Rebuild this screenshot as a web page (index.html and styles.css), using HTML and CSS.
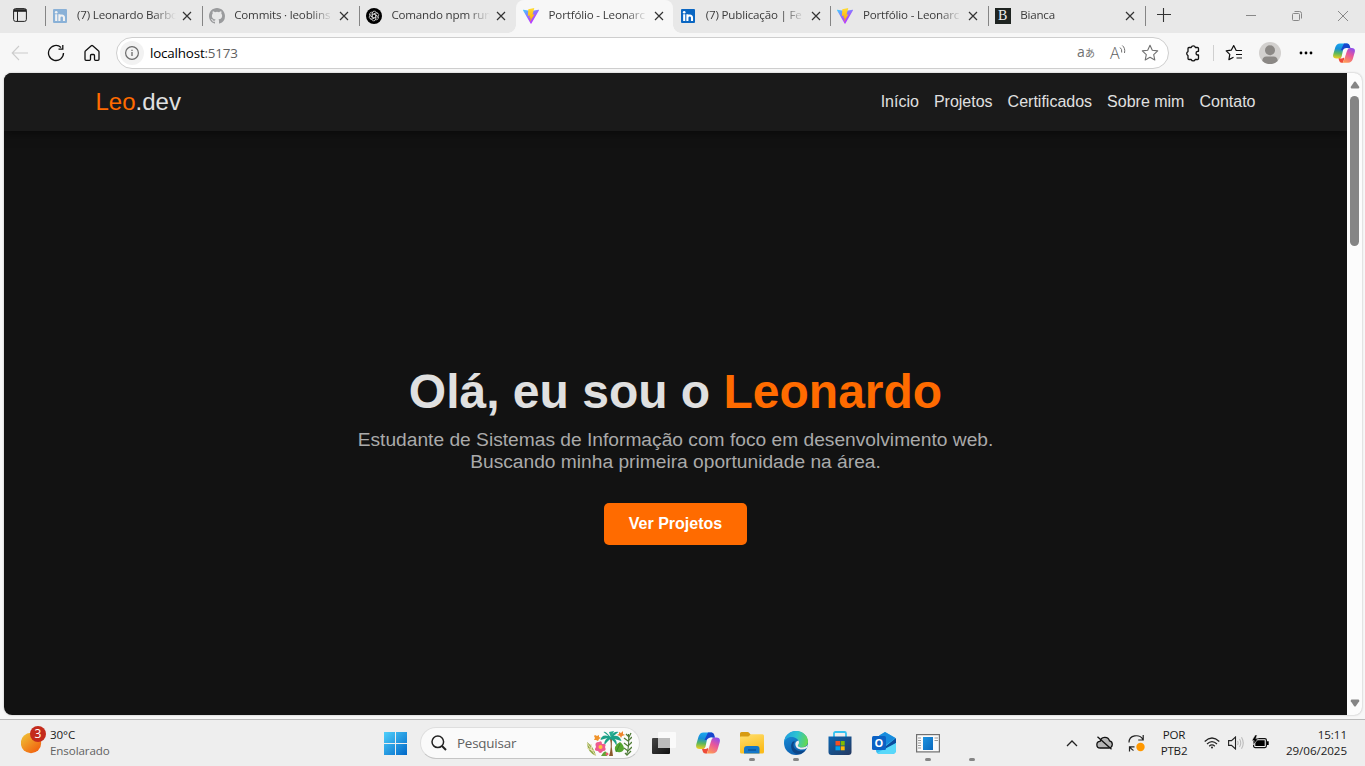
FILE: index.html
```html
<!DOCTYPE html>
<html lang="pt-BR">
<head>
<meta charset="utf-8">
<title>Portfólio - Leonardo</title>
<link rel="stylesheet" href="styles.css">
</head>
<body>
<svg class="defs" width="0" height="0">
  <defs>
    <linearGradient id="viteA" x1="0" y1="0" x2="0.6" y2="1"><stop offset="0" stop-color="#41d1ff"/><stop offset="0.6" stop-color="#a05cff"/><stop offset="1" stop-color="#bd34fe"/></linearGradient>
    <linearGradient id="viteB" x1="0" y1="0" x2="0" y2="1"><stop offset="0" stop-color="#ffdd35"/><stop offset="1" stop-color="#ffa800"/></linearGradient>
    <linearGradient id="copA" x1="0.3" y1="0" x2="0.2" y2="1"><stop offset="0" stop-color="#1ba6f0"/><stop offset="0.35" stop-color="#168fd8"/><stop offset="0.65" stop-color="#5cb85a"/><stop offset="1" stop-color="#f5cf1c"/></linearGradient>
    <linearGradient id="copB" x1="0.8" y1="0" x2="0.3" y2="1"><stop offset="0" stop-color="#8a4cf0"/><stop offset="0.45" stop-color="#e8569b"/><stop offset="1" stop-color="#ff9a55"/></linearGradient>
    <linearGradient id="winG" x1="0" y1="0" x2="1" y2="1"><stop offset="0" stop-color="#4fd0fb"/><stop offset="1" stop-color="#0067c8"/></linearGradient>
    <linearGradient id="sunG" x1="0.1" y1="0.1" x2="0.8" y2="0.9"><stop offset="0" stop-color="#efbd35"/><stop offset="1" stop-color="#f1640f"/></linearGradient>
    <linearGradient id="foldG" x1="0" y1="0" x2="0.4" y2="1"><stop offset="0" stop-color="#ffdf70"/><stop offset="1" stop-color="#fbbc1b"/></linearGradient>
    <linearGradient id="edgeA" x1="0" y1="0.3" x2="1" y2="0.5"><stop offset="0" stop-color="#1f9fe0"/><stop offset="0.5" stop-color="#2cc3d2"/><stop offset="1" stop-color="#67d84f"/></linearGradient>
    <linearGradient id="edgeB" x1="0" y1="0" x2="0.5" y2="1"><stop offset="0" stop-color="#1c93dc"/><stop offset="1" stop-color="#0b5cad"/></linearGradient>
    <linearGradient id="storeG" x1="0" y1="0" x2="1" y2="1"><stop offset="0" stop-color="#0b66b2"/><stop offset="1" stop-color="#25375e"/></linearGradient>
    <linearGradient id="appG" x1="0" y1="0" x2="1" y2="1"><stop offset="0" stop-color="#1d93e0"/><stop offset="1" stop-color="#0a68bd"/></linearGradient>
    <linearGradient id="tvG" x1="0" y1="0" x2="1" y2="1"><stop offset="0" stop-color="#454545"/><stop offset="1" stop-color="#111"/></linearGradient>

    <symbol id="linkedin" viewBox="0 0 16 16"><rect x="1" y="1" width="14" height="14" rx="1" fill="#0a66c2"/><circle cx="4.2" cy="4.3" r="1.3" fill="#fff"/><path d="M4.200 6.300V13M7.400 13V6.300M7.400 9.600C7.500 7.200 12 6.400 12 9.800V13" fill="none" stroke="#fff" stroke-width="2.100"/></symbol>
    <symbol id="github" viewBox="0 0 16 16"><path fill="#9a9b9d" d="M8 0C3.58 0 0 3.58 0 8c0 3.54 2.29 6.53 5.47 7.59.4.07.55-.17.55-.38 0-.19-.01-.82-.01-1.49-2.01.37-2.53-.49-2.69-.94-.09-.23-.48-.94-.82-1.13-.28-.15-.68-.52-.01-.53.63-.01 1.08.58 1.23.82.72 1.21 1.87.87 2.33.66.07-.52.28-.87.51-1.07-1.78-.2-3.64-.89-3.64-3.95 0-.87.31-1.59.82-2.15-.08-.2-.36-1.02.08-2.12 0 0 .67-.21 2.2.82a7.6 7.6 0 0 1 4 0c1.53-1.04 2.2-.82 2.2-.82.44 1.1.16 1.92.08 2.12.51.56.82 1.27.82 2.15 0 3.07-1.87 3.75-3.65 3.95.29.25.54.73.54 1.48 0 1.07-.01 1.93-.01 2.2 0 .21.15.46.55.38A8.01 8.01 0 0 0 16 8c0-4.42-3.58-8-8-8z"/></symbol>
    <symbol id="chatgpt" viewBox="0 0 16 16"><circle cx="8" cy="8" r="8" fill="#000"/><g fill="none" stroke="#ddd" stroke-width="0.7"><path id="petal" d="M6.200 9V5.300a2.200 2.200 0 0 1 4.100-1.100M6.200 6.900l3-1.700a2.200 2.200 0 0 1 2.600.3"/><use href="#petal" transform="rotate(60 8 8)"/><use href="#petal" transform="rotate(120 8 8)"/><use href="#petal" transform="rotate(180 8 8)"/><use href="#petal" transform="rotate(240 8 8)"/><use href="#petal" transform="rotate(300 8 8)"/></g></symbol>
    <symbol id="vite" viewBox="0 0 16 16"><path d="M.5 1.700 8 3l7.500-1.300c.5 0 .6.3.4.7L8.400 15.400c-.2.3-.6.3-.8 0L.1 2.400c-.2-.4 0-.8.4-.7z" fill="url(#viteA)"/><path d="m11.300.1-6 1.200L4.900 7.900l2-.4-.5 2.600 1.300-.4-.7 4 4.500-7.400-2 .4z" fill="url(#viteB)"/></symbol>
    <symbol id="close" viewBox="0 0 10 10"><path d="m1 1 8 8M9 1 1 9" stroke="#333" stroke-width="1.200"/></symbol>
    <symbol id="copilot" viewBox="0 0 24 24"><path d="M7.500 1.500H16L10.500 15q-1 3-3.500 3H3.700Q-.8 18 .3 13.300l2.200-7.500Q3.800 1.500 7.500 1.500z" fill="url(#copA)"/><path d="M12 1.500h3.500q2 0 2.600 2l1 3.200h-4.300q-1.500 0-2.500 2.300L8.500 9z" fill="#1746cd"/><path d="M6 18q3 0 4-3.200L12.300 18l-1.400 4.500H9.300q-2 0-2.500-2z" fill="#ee4b38"/><path d="M16.500 22.500H9.800q1.500 0 2-2l3.400-10.800q1-3.200 3.600-3.200h1.500q4.500 0 3.400 4.700l-2.200 7.500q-1.300 3.800-5 3.800z" fill="url(#copB)"/><path d="m11 8.500 1.500-1.300q1-.7 2.300-.7h2q-1.500.7-2.200 3l-2 6.500-1.200 1.300q-.8.700-2.200.700H7.500q1.500-.7 2-2.500z" fill="#fafafa"/></symbol>
  </defs>
</svg>

<header class="tabs">
  <div class="tab-menu"><svg width="14" height="14" viewBox="0 0 14 14" fill="none" stroke="#222"><rect x=".6" y=".6" width="12.800" height="12.800" rx="2"/><path d="M.6 2.500h12.800" stroke-width="2.600"/><path d="M4.500 3v10"/></svg></div>
  <div class="tab"><svg class="fav faded"><use href="#linkedin"/></svg><span class="label">(7) Leonardo Barbo</span><svg class="x"><use href="#close"/></svg></div>
  <div class="tab"><svg class="fav"><use href="#github"/></svg><span class="label">Commits · leoblins</span><svg class="x"><use href="#close"/></svg></div>
  <div class="tab"><svg class="fav"><use href="#chatgpt"/></svg><span class="label">Comando npm run</span><svg class="x"><use href="#close"/></svg></div>
  <div class="tab active"><svg class="fav"><use href="#vite"/></svg><span class="label">Portfólio - Leonarc</span><svg class="x"><use href="#close"/></svg></div>
  <div class="tab plain"><svg class="fav"><use href="#linkedin"/></svg><span class="label">(7) Publicação | Fe</span><svg class="x"><use href="#close"/></svg></div>
  <div class="tab"><svg class="fav"><use href="#vite"/></svg><span class="label">Portfólio - Leonarc</span><svg class="x"><use href="#close"/></svg></div>
  <div class="tab"><span class="fav bfav">B</span><span class="label">Bianca</span><svg class="x"><use href="#close"/></svg></div>
  <div class="tab-end"><svg width="14" height="14" viewBox="0 0 14 14"><path d="M6.500 0v14M0 6.500h14" stroke="#333" stroke-width="1.100"/></svg></div>
  <div class="win">
    <svg width="12" height="12" viewBox="0 0 12 12" fill="none" stroke="#888"><path d="M1 5.500h10"/></svg>
    <svg width="12" height="12" viewBox="0 0 12 12" fill="none" stroke="#888"><rect x="1.500" y="3.500" width="7" height="7" rx="1"/><path d="M3.500 1.500H8.500q2 0 2 2V8.500"/></svg>
    <svg width="12" height="12" viewBox="0 0 12 12" fill="none" stroke="#888"><path d="m1 1 10 10M11 1 1 11"/></svg>
  </div>
</header>

<div class="toolbar">
  <span class="tool"><svg width="18" height="16" viewBox="0 0 18 16" fill="none" stroke="#ccc" stroke-width="1.100"><path d="M17 8H1.500M8 1 1.200 8 8 15"/></svg></span>
  <span class="tool"><svg width="18" height="18" viewBox="0 0 18 18" fill="none" stroke="#111" stroke-width="1.300"><path d="M16.500 9A7.500 7.500 0 1 1 14 3.400M15.800 1v4.200h-4.300"/></svg></span>
  <span class="tool"><svg width="16" height="18" viewBox="0 0 16 18" fill="none" stroke="#111" stroke-width="1.300" stroke-linejoin="round"><path d="M1 8.100c0-.6.200-1 .6-1.300L7.300 1.800q.7-.6 1.400 0l5.700 5q.6.500.6 1.300v7.200q0 1-1 1h-2.500q-1 0-1-1v-3.800q0-1-1-1h-2q-1 0-1 1v3.800q0 1-1 1H2q-1 0-1-1z"/></svg></span>
  <div class="address">
    <span class="info"><svg width="14" height="14" viewBox="0 0 14 14" fill="none" stroke="#6a6a6a"><circle cx="7" cy="7" r="6.400" stroke-width="1.200"/><path d="M7 6v4M7 3.700v1.300" stroke-width="1.300"/></svg></span>
    <span class="url">localhost<em>:5173</em></span>
    <span class="addr-icon kana"><span>a</span>あ</span>
    <span class="addr-icon"><svg width="18" height="18" viewBox="0 0 18 18" fill="none" stroke="#707070"><text class="read" x="1" y="15">A</text><path d="M11 3.500q2.200 1.500 1.700 5M13.300 1.500q3.200 2.500 2.200 7.500" stroke-width="1"/></svg></span>
    <span class="addr-icon"><svg width="18" height="18" viewBox="0 0 18 18" fill="none" stroke="#707070" stroke-width="1.100" stroke-linejoin="round"><path d="m9 1.300 2.300 5 5.400.6-4 3.700 1.100 5.400L9 13.300 4.200 16l1.100-5.400-4-3.700 5.400-.6z"/></svg></span>
  </div>
  <span class="ext"><svg width="16" height="18" viewBox="0 0 16 18" fill="none" stroke="#111" stroke-width="1.300" stroke-linejoin="round"><path d="M4 3.500h2.200a2.200 2.200 0 0 1 4.200 0h2.100q1 0 1 1v2.800h-1a1.900 1.900 0 0 0 0 3.700h1v3.500q0 1-1 1h-2.300a2.100 2.100 0 0 1-4 0H4q-1 0-1-1v-2.900a2.200 2.200 0 0 1 0-4V4.500q0-1 1-1z"/></svg></span>
  <span class="bar"></span>
  <span class="tool"><svg width="18" height="18" viewBox="0 0 18 18" fill="none" stroke="#111" stroke-width="1.200" stroke-linejoin="round"><path d="M17 6.500h-5.800L8.700 1.600 6.200 6.200l-5 .7 3.600 3.500-.9 5.200 4.600-2.400M11 10.500h6M11.500 14H17"/></svg></span>
  <span class="tool"><svg width="22" height="22" viewBox="0 0 22 22"><circle cx="11" cy="11" r="11" fill="#d2d0ce"/><circle cx="11" cy="8.300" r="5" fill="#8b8885"/><path d="M3.300 19q0-4.500 4.300-4.500h6.800q4.300 0 4.300 4.500a11 11 0 0 1-15.400 0" fill="#8b8885"/></svg></span>
  <span class="tool"><svg width="14" height="4" viewBox="0 0 14 4"><circle cx="2" cy="2" r="1.400"/><circle cx="7" cy="2" r="1.400"/><circle cx="12" cy="2" r="1.400"/></svg></span>
  <span class="cop"><svg width="22" height="22"><use href="#copilot"/></svg></span>
</div>

<div class="viewport">
  <main class="page">
    <nav class="nav">
      <div class="logo"><span>Leo</span>.dev</div>
      <div class="links"><a>Início</a><a>Projetos</a><a>Certificados</a><a>Sobre mim</a><a>Contato</a></div>
    </nav>
    <section class="hero">
      <h1>Olá, eu sou o <span>Leonardo</span></h1>
      <p>Estudante de Sistemas de Informação com foco em desenvolvimento web.<br>Buscando minha primeira oportunidade na área.</p>
      <a class="btn">Ver Projetos</a>
    </section>
  </main>
  <div class="scroll">
    <svg width="10" height="8" viewBox="0 0 10 8"><path d="M4.200.8q.8-.8 1.600 0L9.200 5.800q.5 1.700-.8 1.700H1.600Q.3 7.500.8 5.800z" fill="#858585"/></svg>
    <div class="thumb"></div>
    <svg class="down" width="10" height="8" viewBox="0 0 10 8"><path d="M4.200 7.200q.8.800 1.600 0L9.200 2.200Q9.700.5 8.400.5H1.600Q.3.500.8 2.200z" fill="#858585"/></svg>
  </div>
</div>

<footer class="taskbar">
  <div class="weather">
    <div class="sun"><svg width="26" height="28" viewBox="0 0 26 28"><circle cx="10" cy="17" r="10.200" fill="url(#sunG)"/><circle cx="17" cy="8" r="8" fill="#c42b1c"/><text x="17" y="12.300" text-anchor="middle" class="count">3</text></svg></div>
    <div class="wtext"><div>30°C</div><div class="sub">Ensolarado</div></div>
  </div>
  <span class="start"><svg width="23" height="23" viewBox="0 0 23 23"><path d="M0 0h11v11H0zM12 0h11v11H12zM0 12h11v11H0zM12 12h11v11H12z" fill="url(#winG)"/></svg></span>
  <div class="search">
    <svg width="16" height="16" viewBox="0 0 16 16" fill="none" stroke="#222"><circle cx="6.800" cy="6.800" r="5.800" stroke-width="1.500"/><path d="m11 11 4 4" stroke-width="2"/></svg>
    <span>Pesquisar</span>
    <svg class="palm" width="46" height="27" viewBox="0 0 46 27" fill="none">
      <path d="M24 9q2 8-1 17h4q-2-9-1-17z" fill="#8b5a2b"/>
      <path d="M24.500 7q-5-6-7-5l5 4q-7-2-8 4l7-2q-4 3-3 7 4-5 6-6 4 2 6 7 1-5-2-7l7 2q-2-6-8-5l5-4q-5-1-8 5z" fill="#1ba187"/>
      <path d="M25 8l-2-6 5-1z" fill="#25ae91"/>
      <path d="M1 12q7 5 9 14Q1 22 1 12z" fill="#91aa48"/><path d="m1 13 9 13M1 18l7 3M5 14l1 7" stroke="#e8dfad"/>
      <path d="M9 5l2 1 2-1v2l2 1-2 1-1 2-2-1-2 0 1-2-1-2z" fill="#f0932b"/>
      <path d="m33 2 2 1 2-2 0 3 2 1-3 1-1 2-1-2-3-1 2-1z" fill="#ef852e"/>
      <path d="M13 12q3-2 3 2 5-1 3 3 2 4-2 4-3 4-5 0-5 0-2-4-2-5 3-5z" fill="#ee5a90"/><circle cx="14.500" cy="17" r="2" fill="#ffc33c"/>
      <path d="M34 12q4 3 4 7-2 4-6 3-4 0-3-5 1-3 5-5z" fill="#55a62f"/><path d="m34 14-4 8" stroke="#38832a"/>
      <path d="M42.500 4q1 13-2 21" stroke="#456e31"/><path d="m38 8 4 3 4-4M38 13l4 3 4-4M38 18l4 3 4-4M39 23l2 2 4-4M40 4l3 3 2-4" stroke="#507c37" stroke-width="1.300"/>
      <path d="M17 23q4-4 4 3h-6z" fill="#63a436"/><circle cx="21" cy="24" r="1.500" fill="#ec5d70"/>
    </svg>
  </div>
  <div class="apps">
    <span class="app"><svg width="24" height="24" viewBox="0 0 24 24"><rect y="7" width="18" height="16" rx="1" fill="url(#tvG)"/><rect x="6" y="1" width="18" height="16" rx="1" fill="#fafafa"/><path d="M6 7h12v10H7q-1 0-1-1z" fill="#bcbcbc"/></svg></span>
    <span class="app"><svg width="24" height="24"><use href="#copilot"/></svg></span>
    <span class="app run"><svg width="24" height="24" viewBox="0 0 24 24"><path d="M0 2.500Q0 1 1.500 1h6q1 0 2 1.200L11 4v5H0z" fill="#d79b13"/><path d="M0 6q0-.5.500-.5H8q1 0 1.500-1t1.500-1.200h11.500q1.500 0 1.500 1.500V21q0 1.500-1.500 1.500h-21Q0 22.500 0 21z" fill="url(#foldG)"/><path d="M4 22.500V18q0-3 3-3h10q2.500 0 2.500 3v4.500z" fill="#1477c8"/><path d="M8 19h8" stroke="#0a559d" stroke-width="1.500"/></svg></span>
    <span class="app run"><svg width="24" height="24" viewBox="0 0 24 24"><circle cx="12" cy="12" r="12" fill="url(#edgeB)"/><path d="M0 11.500C.5 4.500 6 0 12 0c7 0 12 5 12 10.500 0 3.500-2.700 6-6 6-2.700 0-4.200-1-4.200-1.800 0-.8 1.200-1.300 1.200-3.200C15 8.600 11.500 6 7.500 6 3.500 6 .8 8.500 0 11.500z" fill="url(#edgeA)"/><path d="M9 10.500c-3 3-2.300 8.500 1.300 11.300 3.200 2.400 8 1.400 11.200-2.600-5 2.200-9.500.8-11.500-2.700-1-2-.8-4.500 1.200-6z" fill="#0d4586"/><path d="M14.500 9.500q-3 .5-3.200 3.500.2 4.500 5.200 5.500 4 .5 6.600-1.800l-.5 1.500 1.400-5q-2.500 4-7.500 3.200-2.500-.5-2.700-1.700c0-.8 1.200-1.300 1.200-3.200q0-1-.5-2z" fill="#eee"/></svg></span>
    <span class="app"><svg width="24" height="24" viewBox="0 0 24 24"><path d="M6 6V2.500Q6 1 7.500 1h9Q18 1 18 2.500V6" fill="none" stroke="#35c3f1" stroke-width="1.800"/><path d="M.5 5.500h23V21q0 3-3 3h-17q-3 0-3-3z" fill="url(#storeG)"/><path d="M7.500 10H12v4.500H7.500z" fill="#f25022"/><path d="M12.700 10h4v4.500h-4z" fill="#7fba00"/><path d="M7.500 15.300H12v4H7.500z" fill="#00a4ef"/><path d="M12.700 15.300h4v4h-4z" fill="#ffb900"/></svg></span>
    <span class="app"><svg width="24" height="24" viewBox="0 0 24 24"><path d="m13 1 9.500 5.500Q24 7.500 24 9v10q0 4-4 4H8q-4 0-4-4V7z" fill="#36bdf2"/><path d="M7 4.500 13 1l10.500 6L14 14z" fill="#188bdd"/><path d="m24 7-10 8v4l10-7z" fill="#0b4d9f"/><path d="m5 22 19-10v7q0 4-4 4H8z" fill="#58d8fa"/><rect y="5" width="14" height="14" rx="1.500" fill="#0b61c4"/><text x="7" y="16" text-anchor="middle" class="outlook">O</text></svg></span>
    <span class="app run"><svg width="24" height="19" viewBox="0 0 24 19"><rect x=".6" y=".6" width="22.800" height="17.300" fill="#fafafa" stroke="#707070" stroke-width="1.200"/><path d="M7 3h10v13H7z" fill="url(#appG)"/><path d="M2 4h3M2 6.500h3M2 9h3M2 11.500h3M2 14h3M18.500 4H22M18.500 6.500H22" stroke="#999"/></svg></span>
    <span class="app run"></span>
  </div>
  <div class="tray">
    <span class="t32"><svg width="12" height="8" viewBox="0 0 12 8"><path d="m1 7 5-5 5 5" fill="none" stroke="#222" stroke-width="1.300"/></svg></span>
    <span class="t32"><svg width="17" height="14" viewBox="0 0 17 14" fill="none" stroke="#111" stroke-width="1.300"><path d="M4.200 12H12.800a3.600 3.600 0 0 0 .7-7.100A4.800 4.800 0 0 0 4.100 5.400a3.300 3.300 0 0 0 .1 6.600z" fill="#b5b5b5"/><path d="m1.500.7 14 12.600"/></svg></span>
    <span class="t32"><svg width="17" height="18" viewBox="0 0 17 18" fill="none" stroke="#222" stroke-width="1.200"><path d="M1 8.500C1 1 11.500-.5 15 5.500M15.200 1v5h-5M5.500 16.500Q3 15.300 2 13M1.500 17.500v-4.700h5"/><circle cx="12.500" cy="13" r="4.200" fill="#ff9800" stroke="none"/></svg></span>
    <span class="lang">POR<br>PTB2</span>
    <span class="t24"><svg width="16" height="12" viewBox="0 0 16 12" fill="none" stroke="#222" stroke-width="1.200"><path d="M.7 4.500Q8-2.500 15.300 4.500M3 7q5-4.800 10 0M5.200 9.200q2.800-2.600 5.600 0"/><circle cx="8" cy="10.500" r="1" fill="#222" stroke="none"/></svg></span>
    <span class="t24"><svg width="16" height="14" viewBox="0 0 16 14" fill="none" stroke="#222" stroke-width="1.100"><path d="M.6 4.600H3.500L7.500 1v12L3.500 9.400H.6z"/><path d="M9.500 5q1.300 2 0 4M11.500 3q2.500 4 0 8M13.500 1.200q3.500 5.800 0 11.600" stroke="#bbb"/></svg></span>
    <span class="t24 batt"><svg width="17" height="14" viewBox="0 0 17 14"><rect x="1.600" y="3.600" width="12.800" height="9" rx="1.500" fill="none" stroke="#111" stroke-width="1.200"/><path d="M3.300 5.300h9.400v5.600H3.300zM15 6.300h1.700v3.800H15z"/><path d="M3.300-.2-.2 5.700h2.300L1.300 10l5-6.200H3.900L5.200 0z" stroke="#eee" stroke-width=".6"/></svg></span>
    <span class="clock">15:11<br>29/06/2025</span>
  </div>
</footer>
</body>
</html>
```
FILE: styles.css
```css
* { box-sizing: border-box; }

body {
  margin: 0;
  width: 1365px;
  height: 766px;
  overflow: hidden;
  display: flex;
  flex-direction: column;
  background: #f7f7f7;
  font-family: "Open Sans", "Noto Sans", sans-serif;
  font-size: 12px;
  color: #1b1b1b;
}

svg { display: block; flex: none; }
.defs { position: absolute; }

/* Tab strip */
.tabs { height: 33px; flex: none; display: flex; background: #e8e8e8; }
.tab-menu { width: 44.5px; padding: 8px 0 0 13px; }
.tab {
  width: 157.2px;
  flex: none;
  display: flex;
  align-items: center;
  height: 31px;
  padding-left: 6px;
  position: relative;
}
.tab::before { content: ""; width: 1px; height: 20px; background: #858585; position: absolute; left: 0; top: 6px; }
.tab.active { background: #f7f7f7; height: 33px; border-radius: 8px 8px 0 0; padding-bottom: 2px; }
.tab.active::before, .tab.plain::before { display: none; }
.tab.active::after, .tab.plain::after {
  content: "";
  position: absolute;
  width: 8px;
  height: 8px;
  bottom: 0;
  left: -8px;
  background: radial-gradient(circle at 0 0, #e8e8e8 7.5px, #f7f7f7 8px);
}
.tab.plain::after { left: 0; bottom: -2px; background: radial-gradient(circle at 8px 0, #e8e8e8 7.5px, #f7f7f7 8px); }
.fav { width: 16px; height: 16px; margin-left: 1px; }
.faded { opacity: .42; }
.bfav { background: #1f2421; color: #eee; font: 14px/16px "Liberation Serif", serif; text-align: center; }
.label {
  width: 99px;
  margin: -2px 0 0 9.5px;
  white-space: nowrap;
  font-size: 11.6px;
  letter-spacing: -.18px;
  line-height: 18px;
  color: #3b3b3b;
  -webkit-mask-image: linear-gradient(90deg, #000 76px, transparent 99px);
  mask-image: linear-gradient(90deg, #000 76px, transparent 99px);
}
.x { width: 10px; height: 10px; margin-left: 6px; }
.tab-end { padding: 8px 0 0 12px; position: relative; }
.tab-end::before { content: ""; width: 1px; height: 20px; background: #858585; position: absolute; left: 0; top: 6px; }
.win { margin-left: auto; padding: 10px 16px 0 0; display: flex; gap: 34px; }

/* Toolbar */
.toolbar { height: 40px; flex: none; display: flex; align-items: center; padding-left: 2px; }
.tool { width: 36px; display: flex; justify-content: center; }
.address {
  width: 1053px;
  height: 32px;
  margin-left: 6px;
  display: flex;
  align-items: center;
  background: #fff;
  border: 1px solid #cecece;
  border-radius: 16px;
  padding: 0 2px 0 3px;
}
.info { width: 24px; height: 24px; border-radius: 12px; background: #f2f2f2; display: flex; align-items: center; justify-content: center; }
.url { margin: 0 auto 0 6px; font-size: 13.4px; letter-spacing: -.18px; color: #000; }
.url em { font-style: normal; color: #606060; }
.addr-icon { width: 32px; display: flex; justify-content: center; color: #707070; }
.kana { align-items: baseline; font: 10px/16px "Noto Sans CJK JP", sans-serif; padding-bottom: 2px; }
.kana span { font: 14px/16px "Open Sans", sans-serif; }
.read { font: 300 16px "Open Sans", sans-serif; fill: #606060; stroke: none; }
.ext { width: 48px; display: flex; justify-content: center; }
.bar { width: 1px; height: 16px; margin: 0 2px 0 -4px; background: #d0d0d0; }
.cop { width: 40px; display: flex; justify-content: center; }

/* Web page and scrollbar */
.viewport {
  width: 1358px;
  height: 642px;
  flex: none;
  margin-left: 4px;
  display: flex;
  overflow: hidden;
  border-radius: 8px;
  background: #fcfcfc;
  box-shadow: 0 0 2px #aaa;
}
.page { width: 1343px; overflow: hidden; background: #121212; font-family: "Liberation Sans", Arial, sans-serif; color: #e0e0e0; }
.nav {
  height: 58px;
  padding: 0 91.5px;
  display: flex;
  align-items: center;
  justify-content: space-between;
  background: #1a1a1a;
  box-shadow: 0 2px 10px rgba(0, 0, 0, .5);
}
.logo { font-size: 24px; }
.logo span, h1 span { color: #ff6b00; }
.links { display: flex; gap: 15px; font-size: 16px; }
.hero { padding-top: 233px; display: flex; flex-direction: column; align-items: center; text-align: center; }
h1 { margin: 0; font-size: 48px; line-height: 55px; }
.hero p { margin: 10px 0 30px; font-size: 19.2px; line-height: 22px; color: #aaa; }
.btn { padding: 12px 25px; border-radius: 5px; background: #ff6b00; color: #fff; font-size: 16px; font-weight: bold; line-height: 18px; }
.scroll { width: 15px; display: flex; flex-direction: column; align-items: center; padding: 8px 0; }
.thumb { width: 9px; height: 150px; margin-top: 7px; border-radius: 5px; background: #858585; }
.down { margin-top: auto; }

/* Taskbar */
.taskbar { height: 47px; flex: none; margin-top: 4px; border-top: 1px solid #b9b9b9; background: #eee; display: flex; align-items: center; }
.weather { width: 384px; display: flex; padding-left: 21px; margin-top: -1px; }
.sun { width: 29px; }
.count { font: 12px "Open Sans", sans-serif; fill: #fff; }
.wtext { font-size: 11.6px; line-height: 16px; letter-spacing: -.1px; margin-top: 1px; }
.sub { color: #626262; }
.start { width: 36px; }
.search {
  width: 220px;
  height: 32px;
  border: 1px solid #dedede;
  border-bottom-color: #c5c5c5;
  border-radius: 16px;
  background: #fafafa;
  display: flex;
  align-items: center;
  padding-left: 10px;
  font-size: 13.4px;
  color: #606060;
}
.search span { margin-left: 10px; letter-spacing: -.2px; }
.palm { margin: 0 7px 0 auto; }
.apps { display: flex; margin-left: 2px; }
.app { width: 44px; height: 46px; display: flex; align-items: center; justify-content: center; position: relative; }
.run::after { content: ""; position: absolute; left: 19px; bottom: 5px; width: 6px; height: 3px; border-radius: 2px; background: #858585; }
.outlook { font: bold 11px "Open Sans", sans-serif; fill: #fff; }
.tray { margin-left: auto; padding-right: 18px; display: flex; align-items: center; font-size: 11.6px; line-height: 16px; }
.t32 { width: 32px; display: flex; justify-content: center; }
.t24 { width: 24px; display: flex; justify-content: center; }
.batt { padding-bottom: 2px; }
.lang { width: 44px; margin-right: 4px; text-align: center; letter-spacing: -.2px; }
.clock { width: 75px; text-align: right; letter-spacing: -.05px; white-space: nowrap; }
```
